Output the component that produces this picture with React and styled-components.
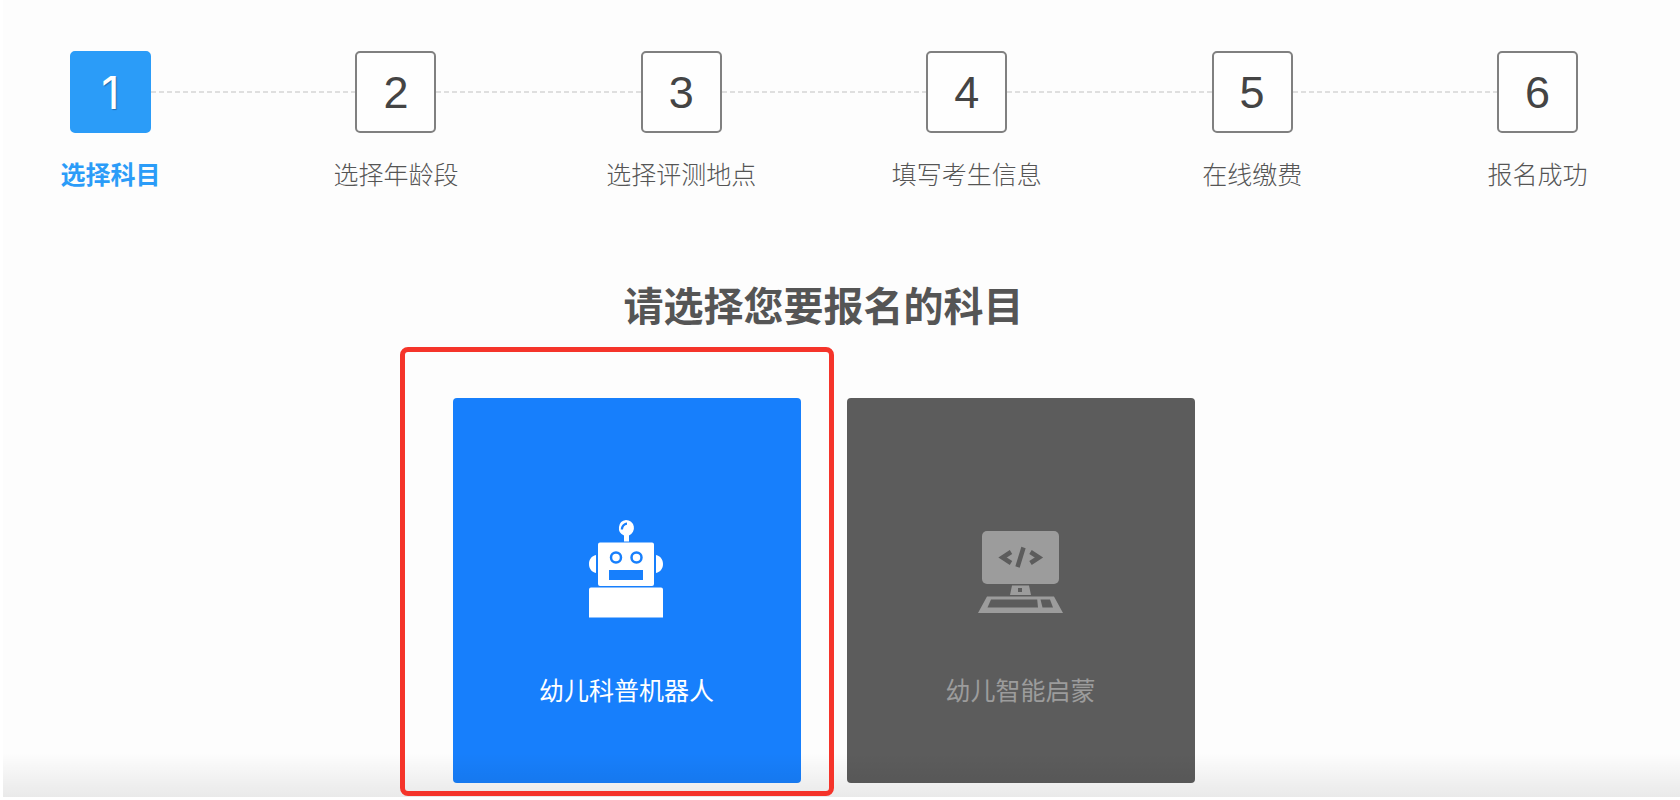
import React, { useState } from "react";
import styled, { createGlobalStyle, css } from "styled-components";

const GlobalStyle = createGlobalStyle`
  * {
    box-sizing: border-box;
  }
  body {
    margin: 0;
    background-color: #ffffff;
    font-family: "Liberation Sans", "Noto Sans CJK SC", sans-serif;
  }
`;

const Page = styled.main`
  position: relative;
  margin-left: 3px;
  padding: 51px 0 14px;
  background-color: #fdfdfd;
`;

const BottomShade = styled.div`
  position: absolute;
  left: 0;
  right: 0;
  bottom: 0;
  height: 44px;
  background: linear-gradient(rgba(0, 0, 0, 0), rgba(0, 0, 0, 0.08));
  pointer-events: none;
`;

const Steps = styled.ol`
  display: flex;
  margin: 0;
  padding: 0 102px 0 67px;
  list-style: none;
`;

const Step = styled.li`
  display: grid;
  grid-template-columns: 81px 1fr;
  row-gap: 24px;
  align-items: center;
  flex: 1;
  &:last-child {
    flex: none;
    grid-template-columns: 81px;
  }
`;

const StepNumber = styled.span`
  display: flex;
  align-items: center;
  justify-content: center;
  height: 82px;
  border: 2px solid #808080;
  border-radius: 5px;
  background-color: #fefefe;
  color: #444444;
  font-size: 45px;
  line-height: 1;
  ${(props) =>
    props.$active &&
    css`
      border-color: #2b9cf8;
      background-color: #2b9cf8;
      color: #ffffff;
      font-family: Inter, sans-serif;
      text-shadow: 1px 1px 1px rgba(0, 0, 0, 0.3);
    `}
`;

const StepLine = styled.span`
  height: 2px;
  background: repeating-linear-gradient(
    90deg,
    #dfdfdf 0 5px,
    transparent 5px 8px
  );
`;

const StepLabel = styled.span`
  grid-column: 1;
  justify-self: center;
  white-space: nowrap;
  font-size: 25px;
  line-height: 36px;
  font-weight: ${(props) => (props.$active ? 700 : 300)};
  color: ${(props) => (props.$active ? "#2b9cf8" : "#555555")};
`;

const Title = styled.h1`
  margin: 86px 36px 0 0;
  text-align: center;
  font-size: 40px;
  line-height: 56px;
  font-weight: 700;
  color: #555555;
`;

const Subjects = styled.div`
  display: flex;
  justify-content: center;
  gap: 46px;
  margin: 63px 36px 0 0;
`;

const SubjectSlot = styled.div`
  position: relative;
`;

// red marker drawn around the recommended subject
const Marker = styled.span`
  position: absolute;
  top: -51px;
  right: -33px;
  bottom: -13px;
  left: -53px;
  z-index: 1;
  border: 5px solid #f5342a;
  border-radius: 8px;
  pointer-events: none;
`;

const SubjectCard = styled.button`
  display: flex;
  flex-direction: column;
  align-items: center;
  justify-content: flex-end;
  gap: 53px;
  width: 348px;
  height: 385px;
  padding: 0 0 76px;
  border: none;
  border-radius: 4px;
  background-color: ${(props) => (props.$selected ? "#177ffc" : "#5c5c5c")};
  color: ${(props) => (props.$selected ? "#ffffff" : "#9c9c9c")};
  cursor: pointer;
`;

const SubjectName = styled.span`
  font-family: "Noto Sans CJK SC", sans-serif;
  font-size: 25px;
  line-height: 36px;
`;

function RobotIcon() {
  return (
    <svg width="75" height="98" viewBox="0 0 75 98" fill="currentColor" aria-hidden="true">
      <path
        fillRule="evenodd"
        d="M37 0a8 8 0 0 1 3 15.4V21.500h-5V15.400A8 8 0 0 1 37 0ZM31.800 9.500h2.200c.2-2.700 1.500-4.300 4-4.800V2.500c-3.800.6-6 3-6.200 7Z"
      />
      <path
        fillRule="evenodd"
        d="M11 22.500h52a2 2 0 0 1 2 2V64a2 2 0 0 1-2 2H11a2 2 0 0 1-2-2V24.500a2 2 0 0 1 2-2ZM20 50v10h34V50Z"
      />
      <path d="M7 35v18C2.500 52 0 48.500 0 44s2.500-8 7-9ZM67 35v18c4.500-1 7-4.500 7-9s-2.500-8-7-9Z" />
      <g fill="none" stroke="#177ffc" strokeWidth="2.500">
        <circle cx="27" cy="37.500" r="5" />
        <circle cx="47.500" cy="37.500" r="5" />
      </g>
      <path d="M2 67.500h70a2 2 0 0 1 2 2V97.500H0V69.500a2 2 0 0 1 2-2Z" />
    </svg>
  );
}

function ComputerIcon() {
  return (
    <svg width="85" height="98" viewBox="0 0 85 98" fill="currentColor" aria-hidden="true">
      <rect x="4" y="11" width="77" height="53" rx="5" />
      <g fill="none" stroke="#5c5c5c" strokeWidth="4.500">
        <path d="M33 32 24.500 37.500l8.500 5.500M52.500 32l8.500 5.500-8.500 5.500M45.500 27.500l-6 19.500" />
      </g>
      <path
        fillRule="evenodd"
        d="M34 65.500h17l2 9.500H32ZM40 68v4h4v-4Z"
      />
      <path
        fillRule="evenodd"
        d="M9 76.500h67L85 93H0ZM13 79.500 9.500 87.500H60l-.8-8ZM62.500 79.500l2 8h10.500l-3-8Z"
      />
    </svg>
  );
}

const steps = [
  "选择科目",
  "选择年龄段",
  "选择评测地点",
  "填写考生信息",
  "在线缴费",
  "报名成功",
];

const subjects = [
  { name: "幼儿科普机器人", icon: RobotIcon, marked: true },
  { name: "幼儿智能启蒙", icon: ComputerIcon },
];

function App() {
  const [selected, setSelected] = useState(0);

  return (
    <>
      <GlobalStyle />
      <Page>
        <Steps>
          {steps.map((label, index) => (
            <Step key={label} aria-current={index === 0 ? "step" : undefined}>
              <StepNumber $active={index === 0}>{index + 1}</StepNumber>
              {index < steps.length - 1 && <StepLine />}
              <StepLabel $active={index === 0}>{label}</StepLabel>
            </Step>
          ))}
        </Steps>
        <Title>请选择您要报名的科目</Title>
        <Subjects>
          {subjects.map(({ name, icon: Icon, marked }, index) => (
            <SubjectSlot key={name}>
              <SubjectCard
                type="button"
                $selected={selected === index}
                aria-pressed={selected === index}
                onClick={() => setSelected(index)}
              >
                <Icon />
                <SubjectName>{name}</SubjectName>
              </SubjectCard>
              {marked && <Marker />}
            </SubjectSlot>
          ))}
        </Subjects>
        <BottomShade />
      </Page>
    </>
  );
}

export default App;
